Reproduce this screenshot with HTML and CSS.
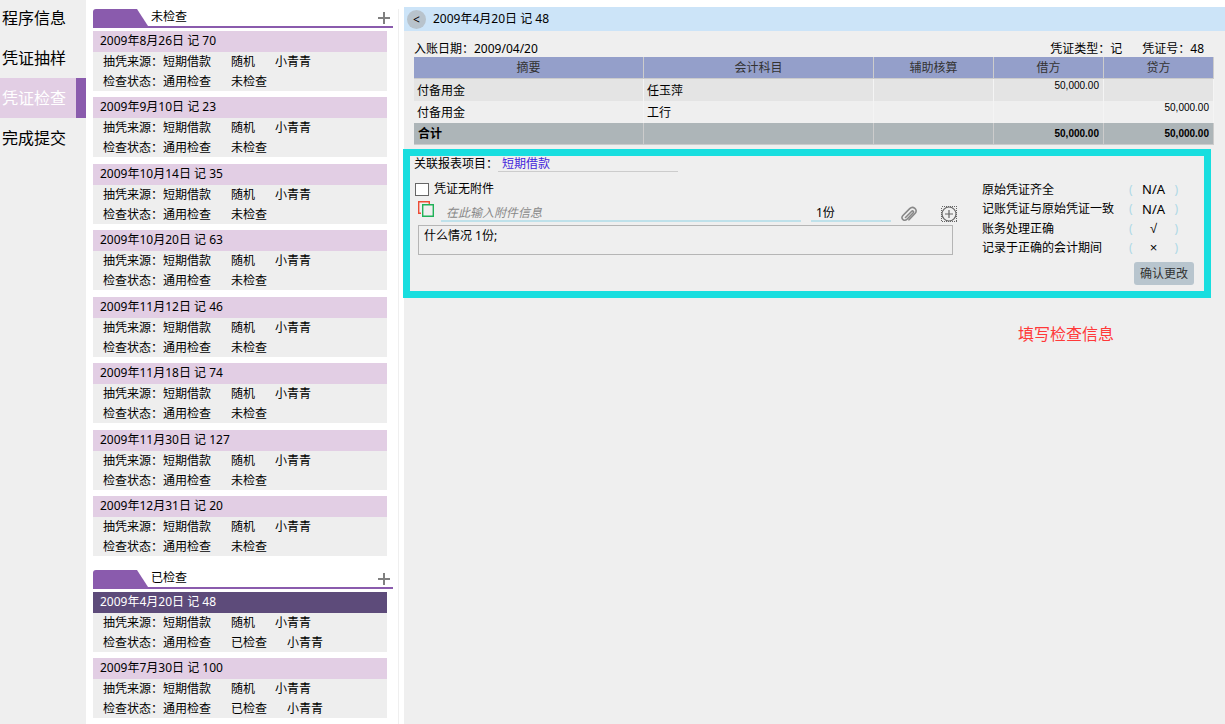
FILE: index.html
```html
<!DOCTYPE html>
<html lang="zh-CN">
<head>
    <meta charset="UTF-8">
    <meta name="viewport" content="width=device-width, initial-scale=1.0">
    <title>凭证检查</title>
    <link rel="stylesheet" href="styles.css">
</head>
<body>
    <div class="layout">
        <nav class="menu">
            <a href="#">程序信息</a>
            <a href="#">凭证抽样</a>
            <a href="#" class="active">凭证检查</a>
            <a href="#">完成提交</a>
        </nav>

        <div class="vouchers">
            <div class="group-header">
                <svg class="tab" viewBox="0 0 55 17"><path d="M0 17V3Q0 0 3 0H44L55 17Z"/></svg>
                <span>未检查</span>
                <button type="button" aria-label="展开未检查"><svg viewBox="0 0 12 12"><path d="M6 0V12M0 6H12"/></svg></button>
            </div>
            <div class="group" id="unchecked"></div>

            <div class="group-header">
                <svg class="tab" viewBox="0 0 55 17"><path d="M0 17V3Q0 0 3 0H44L55 17Z"/></svg>
                <span>已检查</span>
                <button type="button" aria-label="展开已检查"><svg viewBox="0 0 12 12"><path d="M6 0V12M0 6H12"/></svg></button>
            </div>
            <div class="group" id="checked"></div>
        </div>

        <main class="detail">
            <div class="title-bar">
                <button type="button" class="back" aria-label="返回">&lt;</button>
                <span>2009年4月20日 记 48</span>
            </div>

            <div class="voucher-info">
                <span>入账日期：2009/04/20</span>
                <span class="voucher-type">凭证类型：记</span>
                <span>凭证号：48</span>
            </div>

            <table class="entries">
                <colgroup>
                    <col class="col-text"><col class="col-text"><col class="col-aux"><col class="col-money"><col class="col-money">
                </colgroup>
                <thead>
                    <tr><th>摘要</th><th>会计科目</th><th>辅助核算</th><th>借方</th><th>贷方</th></tr>
                </thead>
                <tbody>
                    <tr><td>付备用金</td><td>任玉萍</td><td></td><td class="money">50,000.00</td><td></td></tr>
                    <tr><td>付备用金</td><td>工行</td><td></td><td></td><td class="money">50,000.00</td></tr>
                </tbody>
                <tfoot>
                    <tr><td>合计</td><td></td><td></td><td class="money">50,000.00</td><td class="money">50,000.00</td></tr>
                </tfoot>
            </table>

            <form class="check-box">
                <div class="attachments">
                    <div class="report-item">
                        <label for="report-item">关联报表项目：</label>
                        <input type="text" id="report-item" value="短期借款">
                    </div>
                    <div class="no-attachment">
                        <input type="checkbox" id="no-attachment">
                        <label for="no-attachment">凭证无附件</label>
                    </div>
                    <div class="attachment-row">
                        <button type="button" class="copy" aria-label="复制">
                            <svg viewBox="0 0 16 16"><path class="red" d="M3 12.200H.7V.7H11.300V3"/><path class="green" d="M4.700 3.700H15.300V15.300H4.700Z"/></svg>
                        </button>
                        <input type="text" class="attachment-name" placeholder="在此输入附件信息" aria-label="附件信息">
                        <input type="text" class="attachment-count" value="1份" aria-label="份数">
                        <button type="button" class="clip" aria-label="上传附件">
                            <svg viewBox="0 0 16 16"><path d="M4.500 11.500L10.500 5.500C11.800 4.200 13.300 5.700 12 7L6 13.200C3.500 15.700 -.8 12.800 1.700 9.800L8.700 2.600C12 -.6 17.300 3.600 14.200 7.200L8 13.800"/></svg>
                        </button>
                        <button type="button" class="add" aria-label="添加附件">
                            <svg viewBox="0 0 16 16"><rect x=".5" y=".5" width="15" height="15" stroke-dasharray="1 1" shape-rendering="crispEdges"/><circle cx="8" cy="8" r="7"/><path d="M8 4V12M4 8H12"/></svg>
                        </button>
                    </div>
                    <textarea aria-label="附件清单">什么情况 1份;</textarea>
                </div>

                <div class="checks">
                    <div class="check-row"><span>原始凭证齐全</span><i>(</i><button type="button">N/A</button><i>)</i></div>
                    <div class="check-row"><span>记账凭证与原始凭证一致</span><i>(</i><button type="button">N/A</button><i>)</i></div>
                    <div class="check-row"><span>账务处理正确</span><i>(</i><button type="button" class="mark">√</button><i>)</i></div>
                    <div class="check-row"><span>记录于正确的会计期间</span><i>(</i><button type="button" class="mark">×</button><i>)</i></div>
                    <button type="submit" class="confirm">确认更改</button>
                </div>
            </form>

            <p class="note">填写检查信息</p>
        </main>
    </div>

    <script>
        var unchecked = [
            '2009年8月26日 记 70',
            '2009年9月10日 记 23',
            '2009年10月14日 记 35',
            '2009年10月20日 记 63',
            '2009年11月12日 记 46',
            '2009年11月18日 记 74',
            '2009年11月30日 记 127',
            '2009年12月31日 记 20'
        ];
        var checked = [
            '2009年4月20日 记 48',
            '2009年7月30日 记 100'
        ];

        function addCard(groupId, title, status, checker, selected) {
            var card = document.createElement('div');
            card.className = selected ? 'card selected' : 'card';
            card.innerHTML = `
                <div class="card-title">${title}</div>
                <div class="card-body">
                    <p><span>抽凭来源：短期借款</span><span>随机</span><span>小青青</span></p>
                    <p><span>检查状态：通用检查</span><span>${status}</span><span>${checker}</span></p>
                </div>
            `;
            document.getElementById(groupId).appendChild(card);
        }

        unchecked.forEach(function(title) {
            addCard('unchecked', title, '未检查', '', false);
        });
        checked.forEach(function(title, index) {
            addCard('checked', title, '已检查', '小青青', index === 0);
        });
    </script>
</body>
</html>
```
FILE: styles.css
```css
* {
    box-sizing: border-box;
}
body {
    margin: 0;
    background-color: #fff;
    color: #000;
    font-family: "Noto Sans", "Noto Sans CJK SC", sans-serif;
    font-size: 12px;
    line-height: 20px;
}
p {
    margin: 0;
}
button,
input,
textarea {
    margin: 0;
    padding: 0;
    border: none;
    background: none;
    color: inherit;
    font: inherit;
}
button {
    cursor: pointer;
}
svg {
    display: block;
    fill: none;
}
.layout {
    display: flex;
    min-height: 100vh;
}

/* left menu */
.menu {
    flex: none;
    width: 86px;
    background-color: #efefef;
}
.menu a {
    display: block;
    padding-left: 2px;
    color: #000;
    font-size: 16px;
    line-height: 40px;
    text-decoration: none;
}
.menu a:first-child {
    margin-top: -2px;
}
.menu a.active {
    background-color: #e2cee4;
    border-right: 10px solid #8a5bad;
    color: #fff;
}

/* voucher list */
.vouchers {
    flex: none;
    width: 313px;
    margin-top: 9px;
    margin-right: 5px;
    padding: 0 5px 0 7px;
    border-right: 1px solid #efefef;
}
.group-header {
    display: flex;
    height: 19px;
    margin-bottom: 3px;
    border-bottom: 2px solid #8a5bad;
    line-height: 16px;
}
.group + .group-header {
    margin-top: 7px;
}
.tab {
    width: 55px;
    height: 17px;
    margin-right: 3px;
    fill: #8a5bad;
}
.group-header button {
    align-self: center;
    margin-left: auto;
    margin-right: 3px;
}
.group-header button svg {
    width: 12px;
    height: 12px;
    stroke: #808080;
    stroke-width: 2;
}
.group {
    display: flow-root;
    margin-right: 6px;
}
.card {
    margin-bottom: 6px;
}
.card:nth-child(even) {
    margin-bottom: 7px;
}
.card-title {
    height: 21px;
    padding-left: 7px;
    background-color: #e2cee4;
}
.card.selected .card-title {
    background-color: #5d4b7a;
    color: #fff;
}
.card-body {
    height: 39px;
    padding-left: 10px;
    background-color: #eee;
}
.card-body p {
    display: flex;
    gap: 20px;
}

/* voucher detail */
.detail {
    flex: 1;
    min-width: 0;
    margin-top: 7px;
    background-color: #efefef;
}
.title-bar {
    display: flex;
    align-items: center;
    gap: 7px;
    height: 24px;
    padding-left: 3px;
    background-color: #cce4f8;
    line-height: 22px;
}
.back {
    width: 19px;
    height: 19px;
    border-radius: 50%;
    background-color: #b8c3cc;
    line-height: 19px;
}
.voucher-info {
    display: flex;
    gap: 20px;
    height: 26px;
    margin: 0 21px 0 10px;
    padding-top: 8px;
}
.voucher-type {
    margin-left: auto;
}
.entries {
    width: calc(100% - 21px);
    margin-left: 10px;
    border-spacing: 0;
    table-layout: fixed;
}
.col-aux {
    width: 120px;
}
.col-money {
    width: 110px;
}
.entries th,
.entries td {
    height: 22px;
    padding: 0 3px;
    border-right: 1px solid #f4f4f4;
}
.entries th {
    background-color: #949fca;
    border-right-color: #ccc;
    border-bottom: 1px solid #ccc;
    color: #333;
    font-weight: normal;
}
.entries tbody td {
    padding-top: 2px;
}
.entries tbody tr:first-child td {
    background-color: #e4e4e4;
}
.entries tfoot td {
    padding-left: 4px;
    background-color: #adb5b8;
    border-right-color: #ccc;
    border-bottom: 1px solid #ccc;
    font-weight: bold;
}
.entries .money {
    padding-right: 4px;
    font-family: "Liberation Sans Narrow", "Liberation Sans", sans-serif;
    font-size: 10px;
    text-align: right;
}
.entries tbody .money {
    padding-top: 0;
    line-height: 14px;
    vertical-align: top;
}

/* check form */
.check-box {
    display: flex;
    gap: 29px;
    margin: 4px 14px 0 -1px;
    border: 7px solid #18dedf;
}
.attachments {
    flex: 1;
    min-width: 0;
}
.report-item {
    display: flex;
    height: 16px;
    padding-left: 4px;
    line-height: 15px;
}
.report-item input {
    width: 180px;
    padding-left: 4px;
    border-bottom: 1px solid #ccc;
    color: #4325dc;
}
.no-attachment {
    display: flex;
    align-items: center;
    gap: 5px;
    height: 18px;
    margin-top: 8px;
    padding-left: 5px;
}
.no-attachment input {
    appearance: none;
    width: 14px;
    height: 13px;
    border: 1px solid #666;
    background-color: #fff;
}
.no-attachment input:checked {
    background-color: #8a5bad;
}
.attachment-row {
    display: flex;
    align-items: center;
    height: 21px;
    margin-top: 3px;
    padding-left: 8px;
}
.attachment-row svg {
    width: 16px;
    height: 16px;
}
.attachment-row input {
    height: 21px;
    padding: 3px 0 0 5px;
    border-bottom: 2px solid #bfe1ea;
}
.attachment-row .attachment-name {
    flex: 1;
    min-width: 0;
    margin: 0 10px 0 7px;
}
.attachment-name::placeholder {
    color: #888;
    font-style: italic;
    opacity: 1;
}
.attachment-row .attachment-count {
    width: 80px;
}
.red {
    stroke: #ed4c35;
    stroke-width: 1.4;
}
.green {
    stroke: #20b158;
    stroke-width: 1.4;
}
.copy {
    align-self: flex-start;
}
.clip,
.add {
    align-self: flex-end;
}
.clip {
    margin: 0 24px 0 10px;
}
.clip svg {
    stroke: #888;
    stroke-width: 1.6;
    stroke-linecap: round;
}
.add {
    margin-right: -4px;
}
.add svg {
    stroke: #666;
    stroke-width: 1.2;
}
.attachments textarea {
    display: block;
    width: calc(100% - 8px);
    height: 30px;
    margin: 3px 0 0 8px;
    padding-left: 5px;
    border: 1px solid #b5b5b5;
    resize: none;
}
.checks {
    flex: none;
    width: 222px;
    padding: 24px 10px 6px 0;
}
.check-row {
    display: flex;
    line-height: 19px;
}
.check-row:nth-child(2) {
    line-height: 20px;
}
.check-row span {
    width: 147px;
}
.check-row i {
    color: #add8e6;
    font-style: normal;
}
.check-row button {
    width: 42px;
    font-size: 13px;
}
.check-row .mark {
    font-family: "Liberation Sans", sans-serif;
}
.confirm {
    display: block;
    width: 60px;
    height: 23px;
    margin: 5px 0 0 auto;
    border-radius: 3px;
    background-color: #b8c5ce;
    color: #333;
}
.note {
    margin: 26px 111px 0 0;
    color: #ff3939;
    font-size: 16px;
    text-align: right;
}
```
